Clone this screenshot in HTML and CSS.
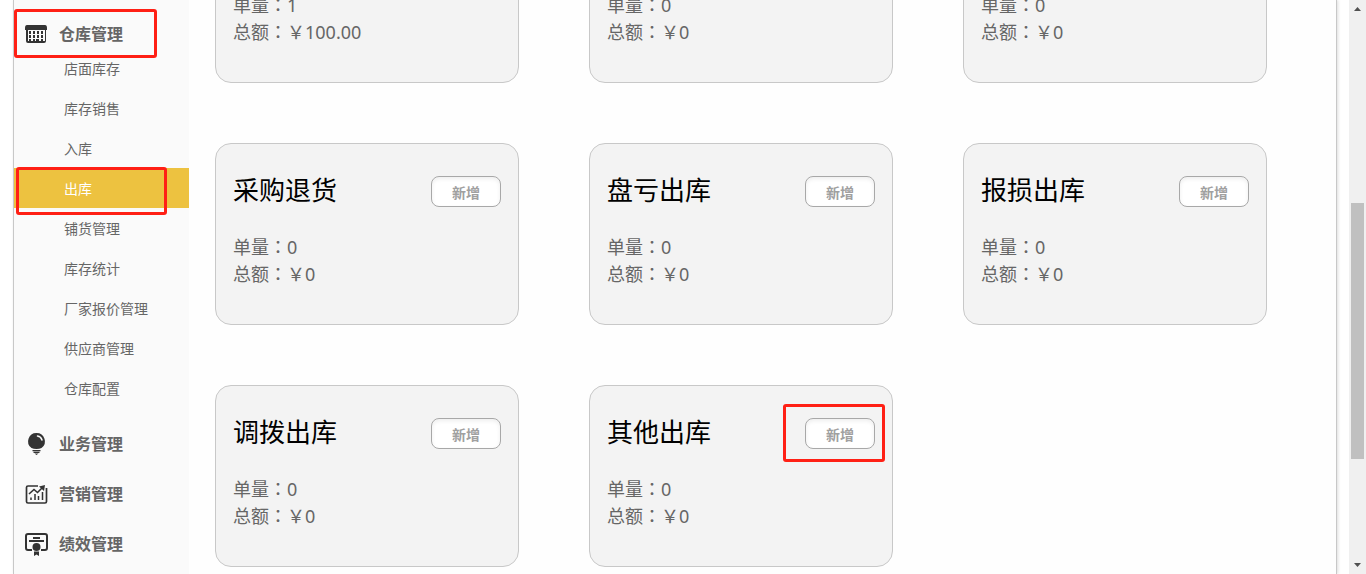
FILE: index.html
```html
<!DOCTYPE html>
<html lang="en">
<head>
    <meta charset="UTF-8">
    <title>出库</title>
    <link rel="stylesheet" href="styles.css">
</head>
<body>
<div class="page">
    <div class="main">
        <nav class="sidebar">
            <div class="menu">
                <a class="menu-title" href="#">
                    <svg class="icon" viewBox="0 0 24 24">
                        <path fill="#333" d="M3 3h18q2 0 2 3v2h-1v11q0 2-2 2H4q-2 0-2-2V8H1V6q0-3 2-3z"/>
                        <path fill="#fafafa" d="M4 8h17v11h-7v-2h-2v2H4z"/>
                        <path stroke="#333" stroke-width="3" stroke-dasharray="2 2" d="M5 10.500h15M5 14.500h15"/>
                        <path stroke="#333" stroke-width="2" stroke-dasharray="2 2" d="M5 18h15"/>
                    </svg>
                    仓库管理
                </a>
                <span class="mark mark-title"></span>
                <ul>
                    <li><a href="#">店面库存</a></li>
                    <li><a href="#">库存销售</a></li>
                    <li><a href="#">入库</a></li>
                    <li class="current"><a href="#">出库</a><span class="mark mark-item"></span></li>
                    <li><a href="#">铺货管理</a></li>
                    <li><a href="#">库存统计</a></li>
                    <li><a href="#">厂家报价管理</a></li>
                    <li><a href="#">供应商管理</a></li>
                    <li><a href="#">仓库配置</a></li>
                </ul>
            </div>
            <div class="menu">
                <a class="menu-title" href="#">
                    <svg class="icon" viewBox="0 0 24 24">
                        <path fill="#333" d="M12.500 1a8.300 8.300 0 0 1 5 15q-2 1-5 1t-5-1a8.300 8.300 0 0 1 5-15z"/>
                        <path fill="none" stroke="#fafafa" stroke-width="1.500" stroke-linecap="round" d="M13.500 4q3.500.5 4.500 4"/>
                        <path stroke="#333" stroke-width="1.200" d="M8.500 18.600h8M9.500 20.400h6"/>
                        <path fill="#333" d="M10.500 21.400h4l-2 1.600z"/>
                    </svg>
                    业务管理
                </a>
            </div>
            <div class="menu">
                <a class="menu-title" href="#">
                    <svg class="icon" viewBox="0 0 24 24" fill="none" stroke="#333">
                        <path stroke-width="1.700" stroke-linejoin="round" d="M14 4H4q-1.500 0-1.500 1.500v14Q2.500 21 4 21h17q1.500 0 1.500-1.500V6"/>
                        <path stroke-width="1.600" d="M5 12l5-4.500 3.500 3L18 6"/>
                        <path fill="#333" stroke="none" d="M15 4.500l6-1.500-1 6z"/>
                        <path stroke-width="1.500" d="M7 15.500V18M11 12v6M14.500 14v4M18.500 10v8"/>
                    </svg>
                    营销管理
                </a>
            </div>
            <div class="menu">
                <a class="menu-title" href="#">
                    <svg class="icon" viewBox="0 0 24 24" fill="none" stroke="#333">
                        <path stroke-width="2" d="M8 18H4q-2 0-2-2V4q0-2 2-2h17q2 0 2 2v12q0 2-2 2h-4"/>
                        <path stroke-width="2" d="M9 6h7M5 9h15"/>
                        <circle cx="12.500" cy="15" r="4" fill="#333" stroke="none"/>
                        <path fill="#333" stroke="none" d="M10 19.500h5V24l-2.500-1.500L10 24z"/>
                    </svg>
                    绩效管理
                </a>
            </div>
        </nav>

        <div class="cards">
            <div class="card">
                <div class="card-head"><h3>销售出库</h3><button type="button">新增</button></div>
                <p>单量：1</p>
                <p>总额：￥100.00</p>
            </div>
            <div class="card">
                <div class="card-head"><h3>铺货出库</h3><button type="button">新增</button></div>
                <p>单量：0</p>
                <p>总额：￥0</p>
            </div>
            <div class="card">
                <div class="card-head"><h3>赠品出库</h3><button type="button">新增</button></div>
                <p>单量：0</p>
                <p>总额：￥0</p>
            </div>
            <div class="card">
                <div class="card-head"><h3>采购退货</h3><button type="button">新增</button></div>
                <p>单量：0</p>
                <p>总额：￥0</p>
            </div>
            <div class="card">
                <div class="card-head"><h3>盘亏出库</h3><button type="button">新增</button></div>
                <p>单量：0</p>
                <p>总额：￥0</p>
            </div>
            <div class="card">
                <div class="card-head"><h3>报损出库</h3><button type="button">新增</button></div>
                <p>单量：0</p>
                <p>总额：￥0</p>
            </div>
            <div class="card">
                <div class="card-head"><h3>调拨出库</h3><button type="button">新增</button></div>
                <p>单量：0</p>
                <p>总额：￥0</p>
            </div>
            <div class="card">
                <div class="card-head">
                    <h3>其他出库</h3><button type="button">新增</button>
                    <span class="mark mark-btn"></span>
                </div>
                <p>单量：0</p>
                <p>总额：￥0</p>
            </div>
        </div>
    </div>

    <div class="scrollbar">
        <svg viewBox="0 0 7 4"><path d="M0 4L3.500 0 7 4z"/></svg>
        <div class="track"><div class="thumb"></div></div>
        <svg viewBox="0 0 7 4"><path d="M0 0h7L3.500 4z"/></svg>
    </div>
</div>
</body>
</html>
```
FILE: styles.css
```css
* {
    padding: 0;
    margin: 0;
    list-style: none;
    box-sizing: border-box;
}

body {
    font-family: "Noto Sans", "Noto Sans CJK SC", sans-serif;
    background: #fff;
    color: #666;
}

a {
    color: #666;
    text-decoration: none;
}

.page {
    display: flex;
    height: 100vh;
    padding-left: 13px;
    overflow: hidden;
}

.main {
    flex: 1;
    display: flex;
    background: #fefefe;
    border: 1px solid #c8c8c8;
    border-width: 0 1px;
    box-shadow: 1px 0 3px #ddd;
}

/* 左侧菜单 */
.sidebar {
    display: flex;
    flex-direction: column;
    gap: 20px;
    width: 175px;
    padding-top: 18px;
    background: #fafafa;
}

.menu {
    position: relative;
}

.menu-title {
    display: flex;
    align-items: center;
    gap: 11px;
    height: 30px;
    padding-left: 10px;
    font-size: 16px;
    font-weight: bold;
}

.icon {
    width: 24px;
    height: 24px;
    margin-top: 2px;
}

.menu li {
    position: relative;
    height: 40px;
    padding-left: 50px;
    font-size: 14px;
    line-height: 42px;
}

.menu li a {
    display: block;
}

.menu .current {
    background: #edc240;
}

.menu .current a {
    color: #fff;
}

/* 红框标注 */
.mark {
    position: absolute;
    border: 3px solid #ff2015;
    border-radius: 3px;
    pointer-events: none;
}

.mark-title {
    left: 0;
    top: -9px;
    width: 143px;
    height: 49px;
}

.mark-item {
    left: 2px;
    top: -1px;
    width: 151px;
    height: 48px;
}

.mark-btn {
    right: -10px;
    top: -9px;
    width: 102px;
    height: 58px;
}

/* 出库卡片 */
.cards {
    flex: 1;
    display: grid;
    grid-template-columns: repeat(3, 1fr);
    gap: 60px 70px;
    align-content: end;
    padding: 0 69px 7px 26px;
}

.card {
    padding: 27px 17px 36px;
    background: #f3f3f3;
    border: 1px solid #c8c8c8;
    border-radius: 16px;
}

.card-head {
    position: relative;
    display: flex;
    justify-content: space-between;
    align-items: center;
    margin-bottom: 24px;
}

.card h3 {
    font-size: 26px;
    font-weight: normal;
    line-height: 39px;
    color: #000;
}

.card button {
    width: 70px;
    height: 31px;
    margin-top: 2px;
    font-family: inherit;
    font-size: 14px;
    font-weight: bold;
    color: #a0a0a0;
    background: #fff;
    border: 1px solid #a8a8a8;
    border-radius: 8px;
    box-shadow: inset 0 2px 4px #eee;
}

.card p {
    font-family: "Noto Sans", "Noto Sans CJK TC", sans-serif;
    font-size: 18px;
    line-height: 27px;
}

/* 滚动条 */
.scrollbar {
    display: flex;
    flex-direction: column;
    align-items: center;
    width: 17px;
    margin-left: 12px;
    padding: 7px 0;
    background: #f0f0f0;
}

.scrollbar svg {
    width: 7px;
    height: 4px;
    fill: #505050;
}

.track {
    flex: 1;
    width: 13px;
    padding-top: 192px;
}

.thumb {
    height: 256px;
    background: #c0c0c0;
}
```
